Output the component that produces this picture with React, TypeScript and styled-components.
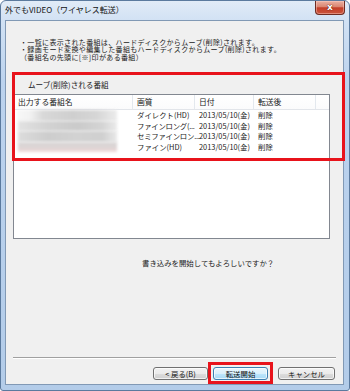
import React from "react";
import styled, { createGlobalStyle } from "styled-components";

const Global = createGlobalStyle`
  html, body { margin: 0; padding: 0; background: #ffffff; }
  body {
    width: 350px; height: 391px; overflow: hidden;
    font-family: "Noto Sans CJK JP", "Noto Sans", sans-serif;
    color: #1a1a1a;
  }
`;

const Window = styled.div`
  width: 350px;
  height: 391px;
  box-sizing: border-box;
  border: 1px solid #5b7a9e;
  border-radius: 6px 6px 3px 3px;
  background: linear-gradient(180deg, #e1ebf7 0px, #d2e2f4 19px, #bcd3ee 80px, #b3cce9 100%);
  display: flex;
  flex-direction: column;
  padding: 0 5px 5px 4px;
`;

const TitleBar = styled.div`
  height: 19px;
  display: flex;
  align-items: flex-start;
  justify-content: space-between;
`;

const TitleText = styled.div`
  margin-top: 3px;
  font-size: 8px;
  line-height: 12px;
  color: #111;
  white-space: nowrap;
`;

const CloseButton = styled.div`
  width: 30px;
  height: 14px;
  margin-right: -1px;
  box-sizing: border-box;
  border: 1px solid #6e2c22;
  border-top: none;
  border-radius: 0 0 4px 4px;
  background: linear-gradient(180deg, #eab0a2 0%, #da8571 45%, #c43f29 52%, #c9553d 100%);
  box-shadow: inset 0 0 0 1px rgba(255, 210, 200, 0.45);
  display: flex;
  align-items: center;
  justify-content: center;
  color: #fff;
  font-family: "DejaVu Sans", sans-serif;
  font-weight: bold;
  font-size: 9px;
  line-height: 9px;
  text-shadow: 0 0 1px #5a1a10, 0 0 1px #5a1a10;
`;

const Client = styled.div`
  flex: 1;
  background: #f0f0f0;
  border: 1px solid #8199b5;
  display: flex;
  flex-direction: column;
`;

const Message = styled.div`
  margin: 18px 0 0 14px;
  font-size: 7px;
  letter-spacing: 0.35px;
  line-height: 7.4px;
  white-space: nowrap;
`;

const ListSection = styled.div`
  position: relative;
  display: flex;
  flex-direction: column;
`;

const Highlight = styled.div<{ $t: number; $r: number; $b: number; $l: number }>`
  position: absolute;
  top: ${(p) => p.$t}px;
  right: ${(p) => p.$r}px;
  bottom: ${(p) => p.$b}px;
  left: ${(p) => p.$l}px;
  border: 3px solid #e8131b;
  pointer-events: none;
`;

const GroupLabel = styled.div`
  margin: 19px 0 0 22px;
  font-size: 7.6px;
  line-height: 10px;
  white-space: nowrap;
`;

const ListView = styled.div`
  margin: 4px 0 0 7px;
  width: 317px;
  height: 145px;
  box-sizing: border-box;
  border: 1px solid #828790;
  background: #ffffff;
  display: flex;
  flex-direction: column;
`;

const cols = "119px 62px 59px 62px 1fr";

const HeaderRow = styled.div`
  display: grid;
  grid-template-columns: ${cols};
  height: 15px;
  box-sizing: border-box;
  border-bottom: 1px solid #e2e5ea;
  background: linear-gradient(180deg, #ffffff 0%, #fbfbfc 100%);
`;

const HeaderCell = styled.div`
  padding-left: 4px;
  border-right: 1px solid #e3e8ee;
  font-size: 7.8px;
  line-height: 14px;
  white-space: nowrap;
  overflow: hidden;
  color: #202020;
  &:last-child { border-right: none; }
`;

const Row = styled.div`
  display: grid;
  grid-template-columns: ${cols};
  height: 10.5px;
`;

const Cell = styled.div<{ $tight?: boolean }>`
  padding-left: 4px;
  font-size: 7.4px;
  letter-spacing: ${(p) => (p.$tight ? "-0.25px" : "0")};
  line-height: 10.5px;
  white-space: nowrap;
  color: #1a1a1a;
  min-width: 0;
`;

const NameCell = styled.div`
  padding-left: 4px;
`;

const Blur = styled.div<{ $bg: string }>`
  width: 99px;
  height: 10.5px;
  background: ${(p) => p.$bg};
  filter: blur(1.6px);
`;

const Question = styled.div`
  margin: 19px 0 0 136px;
  font-size: 7.4px;
  line-height: 10px;
  white-space: nowrap;
`;

const Separator = styled.div`
  margin: 89px 0 0 7px;
  width: 323px;
  height: 0;
  border-top: 1px solid #a0a0a0;
  border-bottom: 1px solid #ffffff;
`;

const ButtonRow = styled.div`
  display: flex;
  margin: 8px 0 0 147px;
  gap: 5px;
`;

const ButtonWrap = styled.div<{ $gapAfter?: number }>`
  position: relative;
  margin-right: ${(p) => p.$gapAfter ?? 0}px;
`;

const Button = styled.div<{ $default?: boolean; $w: number }>`
  width: ${(p) => p.$w}px;
  height: 13px;
  box-sizing: border-box;
  border: 1px solid ${(p) => (p.$default ? "#3c7fb1" : "#707070")};
  border-radius: 3px;
  background: ${(p) =>
    p.$default
      ? "linear-gradient(180deg, #eaf6fd 0%, #d9f0fc 50%, #bee6fd 51%, #a7d9f5 100%)"
      : "linear-gradient(180deg, #f2f2f2 0%, #ebebeb 50%, #dddddd 51%, #cfcfcf 100%)"};
  box-shadow: inset 0 0 0 1px rgba(255, 255, 255, 0.7);
  display: flex;
  align-items: center;
  justify-content: center;
  font-size: 7.4px;
  line-height: 11px;
  color: #111;
  white-space: nowrap;
`;

const rows = [
  {
    q: "ダイレクト(HD)",
    tight: false,
    bg: "linear-gradient(90deg, #f7f7f7 0%, #f2f2f2 12%, #d8d8d8 25%, #cfcfcf 55%, #d6d6d6 80%, #ececec 100%)",
  },
  {
    q: "ファインロング(...",
    tight: true,
    bg: "linear-gradient(90deg, #e2e2e2 0%, #d2d2d2 30%, #cacaca 60%, #d4d4d4 85%, #ebebeb 100%)",
  },
  {
    q: "セミファインロン...",
    tight: true,
    bg: "linear-gradient(90deg, #dcdcdc 0%, #cdcdcd 30%, #d2d2d2 60%, #cfcfcf 85%, #e9e9e9 100%)",
  },
  {
    q: "ファイン(HD)",
    tight: false,
    bg: "linear-gradient(180deg, #d8d6d6 0%, #dcd4d4 60%, #f3d8d8 100%)",
  },
];

export default function App() {
  return (
    <>
      <Global />
      <Window>
        <TitleBar>
          <TitleText>外でもVIDEO（ワイヤレス転送）</TitleText>
          <CloseButton>x</CloseButton>
        </TitleBar>
        <Client>
          <Message>
            <div>・一覧に表示された番組は、ハードディスクからムーブ(削除)されます。</div>
            <div>・録画モード変換や編集した番組もハードディスクからムーブ(削除)されます。</div>
            <div>（番組名の先頭に[※]印がある番組）</div>
          </Message>
          <ListSection>
            <GroupLabel>ムーブ(削除)される番組</GroupLabel>
            <ListView>
              <HeaderRow>
                <HeaderCell>出力する番組名</HeaderCell>
                <HeaderCell>画質</HeaderCell>
                <HeaderCell>日付</HeaderCell>
                <HeaderCell>転送後</HeaderCell>
                <HeaderCell />
              </HeaderRow>
              {rows.map((r, i) => (
                <Row key={i}>
                  <NameCell>
                    <Blur $bg={r.bg} />
                  </NameCell>
                  <Cell $tight={r.tight}>{r.q}</Cell>
                  <Cell>2013/05/10(金)</Cell>
                  <Cell>削除</Cell>
                  <Cell />
                </Row>
              ))}
            </ListView>
            <Highlight $t={11} $r={-2} $b={78} $l={6} />
          </ListSection>
          <Question>書き込みを開始してもよろしいですか？</Question>
          <Separator />
          <ButtonRow>
            <ButtonWrap>
              <Button $w={55}>&lt; 戻る(B)</Button>
            </ButtonWrap>
            <ButtonWrap $gapAfter={5}>
              <Button $default $w={55}>転送開始</Button>
              <Highlight $t={-5} $r={-5} $b={-4} $l={-5} />
            </ButtonWrap>
            <ButtonWrap>
              <Button $w={57}>キャンセル</Button>
            </ButtonWrap>
          </ButtonRow>
        </Client>
      </Window>
    </>
  );
}
